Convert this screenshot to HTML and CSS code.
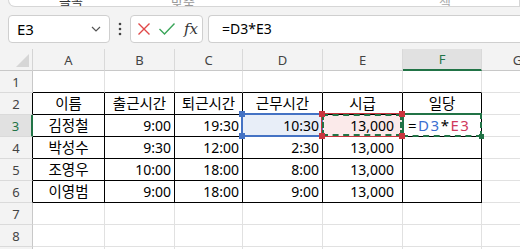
FILE: index.html
```html
<!DOCTYPE html>
<html lang="ko">
    <head>
        <meta charset="UTF-8">
        <meta name="viewport" content="width=device-width, initial-scale=1.0">
        <title>통합 문서1 - Excel</title>
        <link rel="stylesheet" href="styles.css">
    </head>
    <body>
        <div class="ribbon">
            <span class="rb-label rb-font">글꼴</span>
            <span class="rb-label rb-align">맞춤</span>
            <span class="rb-label rb-cell">셀</span>
        </div>

        <div class="formula-bar">
            <div class="name-box">
                <span>E3</span>
                <svg width="10" height="6" viewBox="0 0 10 6"><path d="M1 1 L5 5 L9 1" fill="none" stroke="#555" stroke-width="1.2"/></svg>
            </div>
            <div class="dots">
                <svg width="4" height="14" viewBox="0 0 4 14"><circle cx="2" cy="2" r="1.3" fill="#444"/><circle cx="2" cy="7" r="1.3" fill="#444"/><circle cx="2" cy="12" r="1.3" fill="#444"/></svg>
            </div>
            <div class="fx-box">
                <svg class="ic-cancel" width="14" height="14" viewBox="0 0 14 14"><path d="M1.5 1.5 L12.5 12.5 M12.5 1.5 L1.5 12.5" stroke="#e04848" stroke-width="1.4" fill="none"/></svg>
                <svg class="ic-enter" width="18" height="14" viewBox="0 0 18 14"><path d="M1.5 7 L6.5 12 L16.5 1.5" stroke="#3aa559" stroke-width="1.4" fill="none"/></svg>
                <span class="fx">fx</span>
            </div>
            <div class="formula-input">=D3*E3</div>
        </div>

        <div class="sheet">
            <!-- column headers -->
            <div class="corner"></div>
            <div class="colhead">A</div>
            <div class="colhead">B</div>
            <div class="colhead">C</div>
            <div class="colhead">D</div>
            <div class="colhead">E</div>
            <div class="colhead active">F</div>
            <div class="colhead">G</div>

            <!-- row 1 -->
            <div class="rowhead">1</div>
            <div class="cell above"></div>
            <div class="cell above"></div>
            <div class="cell above"></div>
            <div class="cell above"></div>
            <div class="cell above"></div>
            <div class="cell above"></div>
            <div class="cell"></div>

            <!-- row 2 -->
            <div class="rowhead edge">2</div>
            <div class="cell t center">이름</div>
            <div class="cell t center">출근시간</div>
            <div class="cell t center">퇴근시간</div>
            <div class="cell t center">근무시간</div>
            <div class="cell t center">시급</div>
            <div class="cell t center">일당</div>
            <div class="cell"></div>

            <!-- row 3 -->
            <div class="rowhead edge active">3</div>
            <div class="cell t center">김정철</div>
            <div class="cell t num">9:00</div>
            <div class="cell t num">19:30</div>
            <div class="cell t num ref-blue">
                10:30
                <span class="handle tl"></span>
                <span class="handle bl"></span>
            </div>
            <div class="cell t num won ref-red">
                13,000
                <span class="handle tl"></span>
                <span class="handle tr"></span>
                <span class="handle bl"></span>
                <span class="handle br"></span>
            </div>
            <div class="cell t editing">
                <span>=</span><span class="c-blue">D3</span><span>*</span><span class="c-red">E3</span>
                <span class="handle br"></span>
            </div>
            <div class="cell"></div>

            <!-- row 4 -->
            <div class="rowhead edge">4</div>
            <div class="cell t center">박성수</div>
            <div class="cell t num">9:30</div>
            <div class="cell t num">12:00</div>
            <div class="cell t num">2:30</div>
            <div class="cell t num won">13,000</div>
            <div class="cell t"></div>
            <div class="cell"></div>

            <!-- row 5 -->
            <div class="rowhead edge">5</div>
            <div class="cell t center">조영우</div>
            <div class="cell t num">10:00</div>
            <div class="cell t num">18:00</div>
            <div class="cell t num">8:00</div>
            <div class="cell t num won">13,000</div>
            <div class="cell t"></div>
            <div class="cell"></div>

            <!-- row 6 -->
            <div class="rowhead edge">6</div>
            <div class="cell t center">이영범</div>
            <div class="cell t num">9:00</div>
            <div class="cell t num">18:00</div>
            <div class="cell t num">9:00</div>
            <div class="cell t num won">13,000</div>
            <div class="cell t"></div>
            <div class="cell"></div>

            <!-- row 7 -->
            <div class="rowhead">7</div>
            <div class="cell"></div>
            <div class="cell"></div>
            <div class="cell"></div>
            <div class="cell"></div>
            <div class="cell"></div>
            <div class="cell"></div>
            <div class="cell"></div>

            <!-- row 8 -->
            <div class="rowhead">8</div>
            <div class="cell"></div>
            <div class="cell"></div>
            <div class="cell"></div>
            <div class="cell"></div>
            <div class="cell"></div>
            <div class="cell"></div>
            <div class="cell"></div>

            <!-- row 9 -->
            <div class="rowhead">9</div>
            <div class="cell"></div>
            <div class="cell"></div>
            <div class="cell"></div>
            <div class="cell"></div>
            <div class="cell"></div>
            <div class="cell"></div>
            <div class="cell"></div>
        </div>
    </body>
</html>
```

FILE: styles.css
```css
* {
    box-sizing: border-box;
}

body {
    margin: 0;
    width: 520px;
    height: 249px;
    overflow: hidden;
    background: #f3f3f3;
    font-family: "Noto Sans CJK KR", "Noto Sans", sans-serif;
    color: #000;
}

/* ribbon, only its bottom edge is visible */
.ribbon {
    position: relative;
    height: 7px;
    margin-left: 8px;
    background: #fff;
    border: 1px solid #d6d6d6;
    border-top: none;
    border-bottom-left-radius: 7px;
    overflow: hidden;
}

.rb-label {
    position: absolute;
    bottom: -2px;
    font-size: 13px;
    line-height: 13px;
    color: #333;
}

.rb-font  { left: 50px; }
.rb-align { left: 162px; color: #999; }
.rb-cell  { left: 430px; color: #aaa; }

/* formula bar */
.formula-bar {
    display: flex;
    align-items: center;
    height: 28px;
    margin-top: 8px;
    padding-left: 8px;
}

.name-box {
    display: flex;
    align-items: center;
    justify-content: space-between;
    width: 102px;
    height: 28px;
    padding: 0 8px 0 8px;
    background: #fff;
    border: 1px solid #cfcfcf;
    border-radius: 4px;
    font-family: "Noto Sans", sans-serif;
    font-size: 15px;
}

.dots {
    display: flex;
    align-items: center;
    width: 20px;
    padding-left: 8px;
}

.fx-box {
    display: flex;
    align-items: center;
    width: 73px;
    height: 28px;
    padding-left: 6px;
    background: #fff;
    border: 1px solid #cfcfcf;
    border-radius: 4px;
}

.ic-enter {
    margin-left: 7px;
}

.fx {
    margin-left: 8px;
    font-family: "DejaVu Serif", serif;
    font-style: italic;
    font-size: 15px;
    color: #333;
}

.formula-input {
    flex: 1;
    height: 28px;
    margin-left: 5px;
    padding-left: 13px;
    line-height: 26px;
    background: #fff;
    border: 1px solid #cfcfcf;
    border-right: none;
    border-radius: 4px 0 0 4px;
    font-family: "Noto Sans", sans-serif;
    font-size: 14px;
}

/* sheet grid */
.sheet {
    display: grid;
    grid-template-columns: 33px 72px 70px 68px 80px 80px 79px 72px;
    grid-auto-rows: 22px;
    margin-top: 6px;
}

.corner {
    position: relative;
    border-right: 1px solid #d4d4d4;
    border-bottom: 1px solid #c8c8c8;
}

.corner::after {
    content: "";
    position: absolute;
    right: 3px;
    bottom: 3px;
    border-style: solid;
    border-width: 0 0 13px 13px;
    border-color: transparent transparent #d6d6d6 transparent;
}

.colhead,
.rowhead {
    display: flex;
    align-items: center;
    justify-content: center;
    font-family: "Noto Sans", sans-serif;
    font-size: 13px;
    color: #444;
    background: #f3f3f3;
}

.colhead {
    border-right: 1px solid #d9d9d9;
    border-bottom: 1px solid #c8c8c8;
}

.rowhead {
    border-right: 1px solid #c8c8c8;
    border-bottom: 1px solid #dadada;
}

.colhead.active {
    background: #e1e1e1;
    color: #217346;
    border-bottom: 2px solid #217346;
}

.rowhead.active {
    background: #e1e1e1;
    color: #217346;
    border-right: 2px solid #217346;
}

.rowhead.edge {
    border-right-color: #000;
}

.rowhead.edge.active {
    border-right: 2px solid #217346;
}

.cell {
    display: flex;
    align-items: center;
    padding: 0 3px;
    background: #fff;
    border-right: 1px solid #e1e1e1;
    border-bottom: 1px solid #e1e1e1;
    font-size: 14.5px;
    line-height: 1;
    white-space: nowrap;
}

.cell.above {
    border-bottom-color: #000;
}

.cell.t {
    border-right-color: #000;
    border-bottom-color: #000;
}

.center {
    justify-content: center;
}

.num {
    justify-content: flex-end;
    font-family: "Noto Sans", sans-serif;
    font-size: 14px;
}

.num.won {
    padding-right: 8px;
}

/* reference highlights while editing F3 */
.ref-blue,
.ref-red,
.editing {
    position: relative;
}

.ref-blue {
    background: #e8eef8;
}

.ref-blue::after {
    content: "";
    position: absolute;
    top: -2px;
    left: -2px;
    right: -1px;
    bottom: -1px;
    border: 2px solid #4472c4;
}

.ref-red {
    background: #fbeaea;
}

.ref-red::after {
    content: "";
    position: absolute;
    top: -2px;
    left: -2px;
    right: -1px;
    bottom: -1px;
    border: 1px solid #c8363e;
    outline: 2px dashed #217346;
    outline-offset: -3px;
}

.editing {
    font-family: "Noto Sans", sans-serif;
    font-size: 15px;
    letter-spacing: 1.5px;
    padding-left: 5px;
}

.editing::after {
    content: "";
    position: absolute;
    top: -2px;
    left: -1px;
    right: -1px;
    bottom: -1px;
    border: 2px solid #217346;
    border-right-style: dashed;
    border-bottom-style: dashed;
}

.c-blue {
    color: #3c6fd0;
}

.c-red {
    color: #d03a5c;
}

.handle {
    position: absolute;
    width: 6px;
    height: 6px;
    z-index: 2;
}

.ref-blue .handle { background: #4472c4; }
.ref-red .handle { background: #c8363e; }
.editing .handle { background: #217346; width: 5px; height: 5px; }

.handle.tl { top: -4px; left: -4px; }
.handle.tr { top: -4px; right: -3px; }
.handle.bl { bottom: -3px; left: -4px; }
.handle.br { bottom: -3px; right: -3px; }
```
